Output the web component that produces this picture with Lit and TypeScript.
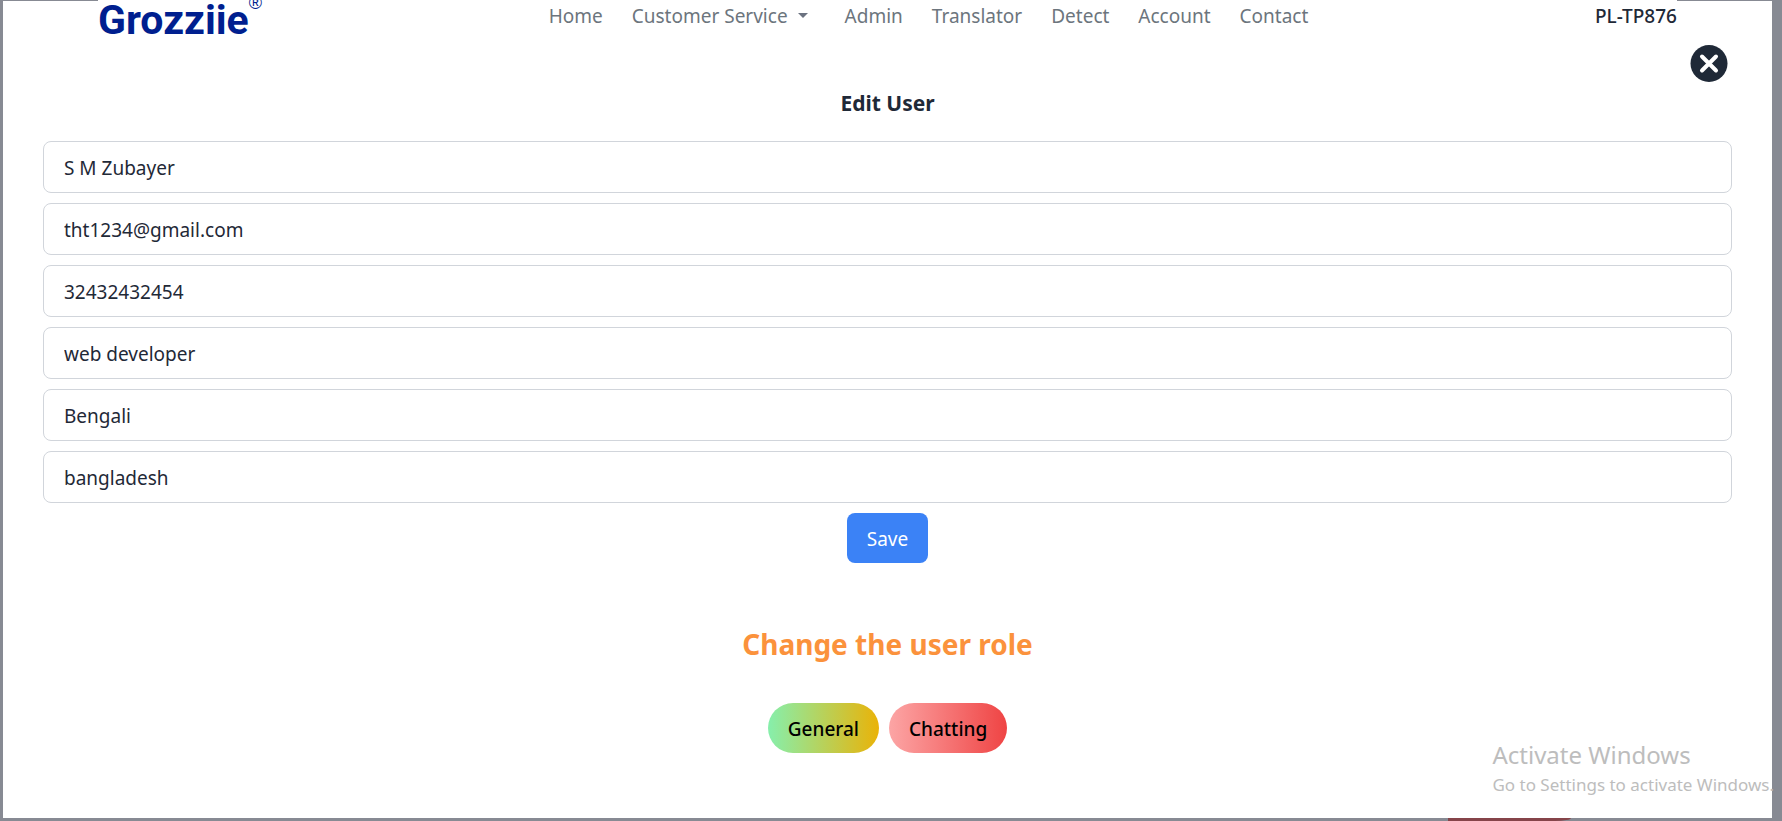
import { LitElement, html, css } from "lit";
import { customElement, state } from "lit/decorators.js";

interface Field {
  id: string;
  label: string;
  type: string;
  value: string;
}

@customElement("site-nav")
export class SiteNav extends LitElement {
  static styles = css`
    :host {
      display: block;
      padding: 0 95px;
    }
    .bar {
      display: flex;
      justify-content: space-between;
      align-items: center;
      height: 29px;
    }
    .brand {
      display: flex;
      align-items: flex-start;
      padding-top: 8px;
      color: #001f8f;
      text-decoration: none;
      font: bold 41px/34px Roboto, "Liberation Sans", Arial, sans-serif;
    }
    .mark {
      font: 18px/0 "Liberation Sans", Arial, sans-serif;
    }
    .links {
      display: flex;
      gap: 29px;
      margin: 0;
      padding: 0;
      list-style: none;
    }
    .link {
      display: flex;
      align-items: center;
      gap: 10px;
      color: #6c757d;
      text-decoration: none;
    }
    .caret {
      margin-right: 8px;
      border: 5px solid transparent;
      border-top-color: #6b7280;
      border-bottom: 0;
    }
    .device {
      font-weight: 500;
      color: #1f2937;
    }
  `;

  private links = ["Home", "Customer Service", "Admin", "Translator", "Detect", "Account", "Contact"];

  render() {
    return html`
      <nav class="bar" aria-label="Main">
        <a class="brand" href="#"><span>Grozziie</span><span class="mark">®</span></a>
        <ul class="links">
          ${this.links.map(
            (name) => html`<li>
              <a class="link" href="#">
                ${name}${name === "Customer Service" ? html`<span class="caret"></span>` : ""}
              </a>
            </li>`
          )}
        </ul>
        <span class="device">PL-TP876</span>
      </nav>
    `;
  }
}

@customElement("app-root")
export class AppRoot extends LitElement {
  static styles = css`
    :host {
      display: flex;
      box-sizing: border-box;
      min-height: 100vh;
      position: relative;
      z-index: 0;
      padding: 1px 10px 3px 3px;
      background: #878a93;
      color: #1f2937;
      font: 19px/30px "Noto Sans", "Open Sans", sans-serif;
    }
    .panel {
      flex: 1;
      background: #fff;
    }
    .strip {
      position: absolute;
      z-index: -1;
      top: 0;
      left: 98px;
      right: 105px;
      height: 1px;
      background: #fff;
    }
    .alert {
      position: absolute;
      bottom: 0;
      right: 211px;
      width: 123px;
      height: 3px;
      background: #86444a;
      border-bottom-right-radius: 16px 3px;
    }
    .content {
      padding: 14px 40px 0;
      display: flex;
      flex-direction: column;
      align-items: center;
    }
    .close {
      align-self: flex-end;
      display: block;
      margin-right: 4px;
      padding: 0;
      border: 0;
      background: none;
      line-height: 0;
      cursor: pointer;
    }
    .title {
      margin: 6px 0 23px;
      font-size: 21px;
      line-height: 30px;
      font-weight: 700;
    }
    .form {
      width: 100%;
      display: flex;
      flex-direction: column;
      align-items: center;
      gap: 10px;
    }
    .input {
      display: block;
      box-sizing: border-box;
      width: 100%;
      height: 52px;
      padding: 2px 20px 0;
      border: 1px solid #d1d5db;
      border-radius: 8px;
      background: #fff;
      color: inherit;
      font: inherit;
    }
    .button {
      height: 50px;
      padding: 2px 20px 0;
      border: 0;
      font: inherit;
      cursor: pointer;
    }
    .save {
      border-radius: 8px;
      background: #3b82f6;
      color: #fff;
    }
    .role {
      margin: 59px 0 36px;
      font-size: 28px;
      line-height: 45px;
      font-weight: 700;
      color: #fb923c;
    }
    .roles {
      display: flex;
      gap: 10px;
    }
    .pill {
      border-radius: 25px;
      font-weight: 500;
      color: #000;
    }
    .general {
      background: linear-gradient(to right, #86efac, #eab308);
    }
    .chatting {
      background: linear-gradient(to right, #fca5a5, #ef4444);
    }
    .watermark {
      position: absolute;
      right: 8px;
      bottom: 21px;
      color: #bdbdbd;
      pointer-events: none;
      white-space: nowrap;
      font-size: 17px;
    }
    .watermark-title {
      font-size: 24px;
    }
  `;

  @state() private fields: Field[] = [
    { id: "name", label: "Name", type: "text", value: "S M Zubayer" },
    { id: "email", label: "Email", type: "email", value: "tht1234@gmail.com" },
    { id: "phone", label: "Phone", type: "tel", value: "32432432454" },
    { id: "job", label: "Designation", type: "text", value: "web developer" },
    { id: "language", label: "Language", type: "text", value: "Bengali" },
    { id: "country", label: "Country", type: "text", value: "bangladesh" },
  ];

  render() {
    return html`
      <div class="strip"></div>
      <div class="panel">
        <site-nav></site-nav>
        <main class="content">
          <button class="close" type="button" aria-label="Close">
            <svg width="38" height="38" viewBox="0 0 38 38" aria-hidden="true">
              <circle cx="19" cy="19.5" r="18.5" fill="#1f2937" />
              <path d="M12 12.5 26 26.5M26 12.5 12 26.5" stroke="#fff" stroke-width="4" stroke-linecap="round" />
            </svg>
          </button>
          <h1 class="title">Edit User</h1>
          <form class="form" @submit=${(e: Event) => e.preventDefault()}>
            ${this.fields.map(
              (f) => html`<input class="input" id=${f.id} type=${f.type} aria-label=${f.label} .value=${f.value} />`
            )}
            <button class="button save" type="submit">Save</button>
          </form>
          <h2 class="role">Change the user role</h2>
          <div class="roles">
            <button class="button pill general" type="button">General</button>
            <button class="button pill chatting" type="button">Chatting</button>
          </div>
        </main>
      </div>
      <div class="alert"></div>
      <div class="watermark">
        <div class="watermark-title">Activate Windows</div>
        <div>Go to Settings to activate Windows.</div>
      </div>
    `;
  }
}
